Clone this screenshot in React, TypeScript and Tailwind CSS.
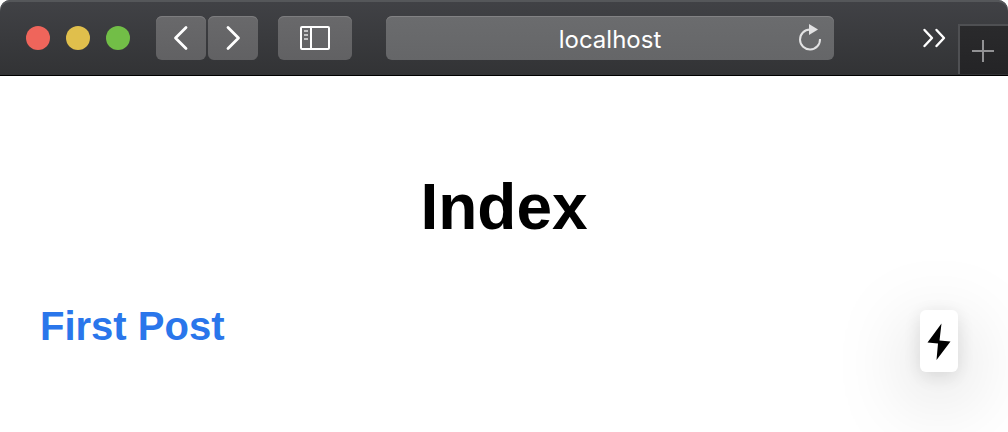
const toolButton =
  'flex h-11 items-center justify-center rounded-md bg-linear-to-b from-[#69696b] to-[#616163] text-white shadow-[inset_0_1px_0_#7d7d7f]';

function BrowserBar() {
  return (
    <header className="flex h-19 w-full items-start overflow-hidden rounded-t-[10px] border-b border-black bg-linear-to-b from-[#414246] to-[#323335] pl-[26px] shadow-[inset_0_2px_0_#55575a]">
      <div className="flex gap-4 pt-[26px]">
        <button aria-label="Close" className="size-6 rounded-full bg-[#ef655b]" />
        <button aria-label="Minimize" className="size-6 rounded-full bg-[#e0bf4c]" />
        <button aria-label="Zoom" className="size-6 rounded-full bg-[#72be47]" />
      </div>
      <div className="ml-[26px] flex gap-0.5 pt-4">
        <button aria-label="Back" className={`w-[50px] ${toolButton}`}>
          <svg width="50" height="44" viewBox="0 0 50 44" fill="none" stroke="currentColor" strokeWidth="2.8" strokeLinecap="round" strokeLinejoin="round">
            <path d="M30 11.500 19.500 22l10.500 10.500" />
          </svg>
        </button>
        <button aria-label="Forward" className={`w-[50px] ${toolButton}`}>
          <svg width="50" height="44" viewBox="0 0 50 44" fill="none" stroke="currentColor" strokeWidth="2.8" strokeLinecap="round" strokeLinejoin="round">
            <path d="M20 11.500l10.500 10.500-10.500 10.500" />
          </svg>
        </button>
      </div>
      <div className="ml-5 pt-4">
        <button aria-label="Show sidebar" className={`w-[74px] ${toolButton}`}>
          <svg width="30" height="24" viewBox="0 0 30 24" fill="none" stroke="currentColor" strokeWidth="2">
            <rect x="1" y="1" width="28" height="22" rx="1" />
            <path d="M11 1v22" />
            <path d="M4 5h4M4 9h4M4 13h4" stroke="#c4c4c5" />
          </svg>
        </button>
      </div>
      <div className="ml-[34px] min-w-0 flex-1 pt-4">
        <div className="relative">
          <input
            aria-label="Address"
            defaultValue="localhost"
            className="block h-11 w-full rounded-md bg-linear-to-b from-[#6b6c6e] to-[#656668] px-12 pt-0.5 text-center font-['Inter',sans-serif] text-2xl font-normal text-white shadow-[inset_0_1px_0_#828284] outline-none"
          />
          <button aria-label="Reload" className="absolute top-2 right-3 text-[#e2e2e3]">
            <svg width="24" height="28" viewBox="0 0 24 28" fill="none">
              <path d="M12 5.500A10 10 0 1 0 22 15" stroke="currentColor" strokeWidth="2" />
              <path d="M11 0v11l9-5.500z" fill="currentColor" />
            </svg>
          </button>
        </div>
      </div>
      <button aria-label="More" className="ml-[88px] pt-7 text-white">
        <svg width="24" height="20" viewBox="0 0 24 20" fill="none" stroke="currentColor" strokeWidth="2.4" strokeLinecap="round" strokeLinejoin="round">
          <path d="M2.500 2l7.500 8-7.500 8M14.500 2l7.500 8-7.500 8" />
        </svg>
      </button>
      <button aria-label="New tab" className="mt-6 ml-3 flex h-[50px] w-[50px] items-start justify-start border-t-2 border-l-2 border-[#4f5053] bg-linear-to-b from-[#2a2a2c] to-[#242426] pt-3.5 pl-3 text-[#929294]">
        <svg width="22" height="22" viewBox="0 0 22 22" stroke="currentColor" strokeWidth="2">
          <path d="M11 0v22M0 11h22" />
        </svg>
      </button>
    </header>
  );
}

export default function App() {
  return (
    <div className="min-h-screen overflow-hidden bg-white font-['Liberation_Sans',Arial,sans-serif]">
      <BrowserBar />
      <main className="px-10 pt-[95px] font-bold">
        <h1 className="text-center text-[64px] leading-[72px] text-black">Index</h1>
        <h2 className="mt-[60px] text-[40px] leading-[46px]">
          <a href="#first-post" className="text-[#2a76eb]">First Post</a>
        </h2>
      </main>
      <button
        aria-label="Prerendered page"
        className="fixed right-[50px] bottom-[60px] flex h-[62px] w-[38px] items-center justify-center rounded-md bg-white text-black shadow-[0_22px_80px_0_rgba(0,0,0,0.25),0_4px_20px_0_rgba(0,0,0,0.12)]"
      >
        <svg width="24" height="38" viewBox="0 0 24 38" fill="currentColor">
          <path d="M14.500 1.500 .500 20.500 11 21.500 9.500 38 23.500 19.500 12.500 18.500z" />
        </svg>
      </button>
    </div>
  );
}
